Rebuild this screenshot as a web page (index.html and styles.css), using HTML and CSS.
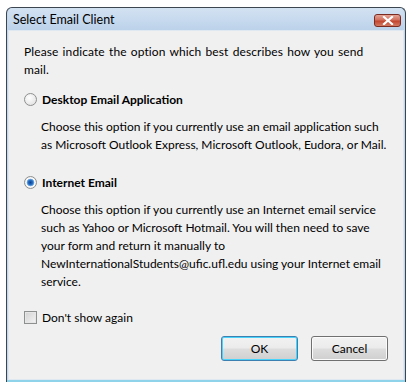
FILE: index.html
```html
<!DOCTYPE html>
<html lang="en">
<head>
  <meta charset="UTF-8">
  <title>Select Email Client</title>
  <link rel="stylesheet" href="styles.css">
</head>
<body>
  <div class="window">
    <div class="title-bar">
      <span class="title">Select Email Client</span>
      <button class="close-btn" aria-label="Close">
        <svg width="12" height="9" viewBox="0 0 12 9">
          <path d="M2 1 L10 8 M10 1 L2 8" stroke="#fff" stroke-width="2.2" stroke-linecap="square"/>
        </svg>
      </button>
    </div>
    <div class="client">
      <p class="intro">Please indicate the option which best describes how you send<br>mail.</p>

      <label class="option first">
        <span class="radio"></span>
        <span class="option-label">Desktop Email Application</span>
      </label>
      <p class="desc">Choose this option if you currently use an email application such<br>as Microsoft Outlook Express, Microsoft Outlook, Eudora, or Mail.</p>

      <label class="option second">
        <span class="radio checked"></span>
        <span class="option-label">Internet Email</span>
      </label>
      <p class="desc">Choose this option if you currently use an Internet email service<br>such as Yahoo or Microsoft Hotmail. You will then need to save<br>your form and return it manually to<br>NewInternationalStudents@ufic.ufl.edu using your Internet email<br>service.</p>

      <label class="option check-row">
        <span class="checkbox"></span>
        <span>Don't show again</span>
      </label>

      <div class="buttons">
        <button class="btn default">OK</button>
        <button class="btn">Cancel</button>
      </div>
    </div>
  </div>
</body>
</html>
```

FILE: styles.css
```css
body {
  margin: 0;
  background: #fff;
  font-family: Lato, "Noto Sans", sans-serif;
  font-size: 12px;
  color: #000;
}

.window {
  margin: 7px 0 0 6px;
  width: 396px;
  border: 1px solid #3c4650;
  border-bottom: none;
  border-radius: 6px 6px 0 0;
  background: #c3d7ec;
  padding: 0 1px 2px 1px;
  box-shadow: inset 0 -2px 0 #8fd3ea;
}

.title-bar {
  height: 22px;
  display: flex;
  align-items: center;
  justify-content: space-between;
  padding: 0 3px 0 5px;
  background: linear-gradient(#d3e2f2, #bcd2ea);
  border-radius: 5px 5px 0 0;
}

.title {
  font-size: 12.5px;
  color: #000;
}

.close-btn {
  width: 27px;
  height: 13px;
  margin-top: 2px;
  padding: 0;
  border: 1px solid #7a2b22;
  border-radius: 3px;
  background: linear-gradient(#e4a394, #d2715f 45%, #c2452f 55%, #d37a63);
  display: flex;
  align-items: center;
  justify-content: center;
}

.client {
  background: #f0f0f0;
  border: 1px solid #dfe7f0;
  padding: 12px 15px 18px 15px;
  height: 318px;
  display: flex;
  flex-direction: column;
}

p {
  margin: 0;
  line-height: 18px;
  white-space: nowrap;
}

.intro {
  word-spacing: 1px;
  letter-spacing: 0.1px;
}

.option {
  display: flex;
  align-items: center;
  gap: 5px;
  height: 18px;
}

.option.first {
  margin-top: 11px;
}

.option.second {
  margin-top: 19px;
}

.option-label {
  font-weight: bold;
}

.radio {
  width: 11px;
  height: 11px;
  border: 1px solid #8e8f8f;
  border-radius: 50%;
  background: radial-gradient(circle at 40% 35%, #fff, #dcdcdc);
}

.radio.checked {
  background: radial-gradient(circle, #0b3f8e 0, #2a74c8 2.5px, #85b5e6 3.6px, #ffffff 4.2px, #e6e6e6 6px);
}

.desc {
  margin-top: 10px;
  padding-left: 17px;
}

.check-row {
  margin-top: 17px;
}

.checkbox {
  width: 11px;
  height: 11px;
  border: 1px solid #8e8f8f;
  background: linear-gradient(135deg, #d2d2d2, #f4f4f4);
  box-shadow: inset 0 0 0 1px #e6e6e6;
}

.buttons {
  display: flex;
  justify-content: flex-end;
  gap: 13px;
  margin-top: auto;
}

.btn {
  width: 77px;
  height: 25px;
  font-family: inherit;
  font-size: 12px;
  border: 1px solid #707070;
  border-radius: 3px;
  background: linear-gradient(#f2f2f2, #ebebeb 48%, #dddddd 52%, #cfcfcf);
  box-shadow: inset 0 0 0 1px #fbfbfb;
}

.btn.default {
  border-color: #3c7fb1;
  box-shadow: inset 0 0 0 1px #48d3fb;
}
```
